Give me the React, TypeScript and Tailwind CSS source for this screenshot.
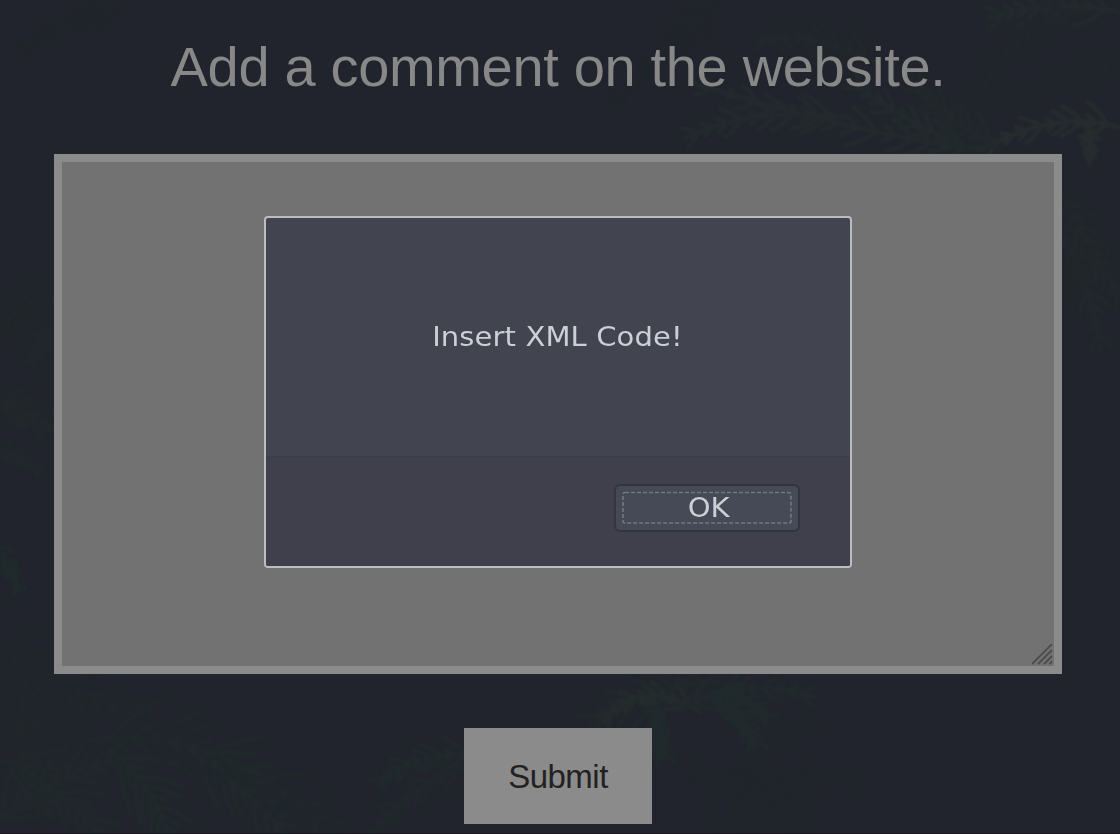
import React from "react";

type Point = [number, number];

interface FrondProps {
  from: Point;
  bend: Point;
  to: Point;
  leaf: number;
  color: string;
  opacity?: number;
  count?: number;
}

/** A conifer twig: a curved stem with tapering needles on both sides. */
function Frond({ from, bend, to, leaf, color, opacity = 1, count = 9 }: FrondProps) {
  let d = `M${from[0]} ${from[1]}Q${bend[0]} ${bend[1]} ${to[0]} ${to[1]}`;
  for (let i = 1; i <= count; i++) {
    const t = i / (count + 1);
    const x = (1 - t) * (1 - t) * from[0] + 2 * t * (1 - t) * bend[0] + t * t * to[0];
    const y = (1 - t) * (1 - t) * from[1] + 2 * t * (1 - t) * bend[1] + t * t * to[1];
    const dx = 2 * (1 - t) * (bend[0] - from[0]) + 2 * t * (to[0] - bend[0]);
    const dy = 2 * (1 - t) * (bend[1] - from[1]) + 2 * t * (to[1] - bend[1]);
    const angle = Math.atan2(dy, dx);
    const size = leaf * 1.25 * (1 - t * 0.6) * (0.8 + 0.4 * Math.sin(i * 2.3));
    for (const side of [-0.8, 0.8]) {
      const a = angle + side;
      const mx = x + Math.cos(a) * size * 0.6;
      const my = y + Math.sin(a) * size * 0.6;
      const ex = mx + Math.cos(angle + side * 0.5) * size * 0.5;
      const ey = my + Math.sin(angle + side * 0.5) * size * 0.5;
      d += `M${x.toFixed(1)} ${y.toFixed(1)}Q${mx.toFixed(1)} ${my.toFixed(1)} ${ex.toFixed(1)} ${ey.toFixed(1)}`;
    }
  }
  return <path d={d} stroke={color} strokeWidth={4.5} strokeLinecap="round" fill="none" opacity={opacity} />;
}

const FRONDS: FrondProps[] = [
  { from: [1120, 128], bend: [1060, 108], to: [980, 150], leaf: 22, color: "#262c2e" },
  { from: [1085, 125], bend: [1092, 140], to: [1089, 164], leaf: 11, color: "#262c2e", count: 5 },
  { from: [980, 150], bend: [860, 135], to: [690, 82], leaf: 28, color: "#232a2d", count: 14 },
  { from: [850, 118], bend: [750, 105], to: [684, 139], leaf: 24, color: "#232a2d" },
  { from: [975, 150], bend: [900, 120], to: [850, 80], leaf: 22, color: "#222a2d" },
  { from: [1000, 150], bend: [950, 120], to: [915, 85], leaf: 24, color: "#21282b" },
  { from: [880, 65], bend: [810, 28], to: [755, 42], leaf: 24, color: "#21272b" },
  { from: [1120, 12], bend: [1050, -2], to: [990, 18], leaf: 26, color: "#222a2d" },
  { from: [1085, 12], bend: [1005, 25], to: [980, 96], leaf: 24, color: "#20262a" },
  { from: [720, 0], bend: [680, 40], to: [610, 105], leaf: 20, color: "#20252a" },
  { from: [1120, 60], bend: [1060, 90], to: [990, 100], leaf: 18, color: "#20262b" },
  { from: [1050, 215], bend: [1090, 270], to: [1101, 350], leaf: 26, color: "#21282b" },
  { from: [1120, 245], bend: [1070, 260], to: [1050, 330], leaf: 30, color: "#20262a" },
  { from: [1060, 190], bend: [1090, 250], to: [1125, 305], leaf: 24, color: "#21272b" },
  { from: [120, 10], bend: [70, 20], to: [22, 48], leaf: 16, color: "#20252a" },
  { from: [70, 285], bend: [20, 300], to: [-10, 340], leaf: 28, color: "#20262a" },
  { from: [65, 310], bend: [42, 340], to: [30, 365], leaf: 18, color: "#20262b" },
  { from: [-10, 400], bend: [20, 405], to: [65, 438], leaf: 24, color: "#21272b" },
  { from: [-10, 454], bend: [15, 450], to: [42, 474], leaf: 12, color: "#20282b", count: 6 },
  { from: [-10, 540], bend: [8, 560], to: [20, 592], leaf: 14, color: "#202a2c", count: 6 },
  { from: [-10, 650], bend: [40, 660], to: [125, 715], leaf: 38, color: "#20262a" },
  { from: [0, 740], bend: [80, 695], to: [150, 710], leaf: 36, color: "#20262a" },
  { from: [30, 670], bend: [10, 730], to: [35, 810], leaf: 34, color: "#20262a" },
  { from: [90, 740], bend: [230, 725], to: [330, 834], leaf: 46, color: "#20282b", count: 12 },
  { from: [110, 750], bend: [160, 790], to: [172, 850], leaf: 42, color: "#20292b" },
  { from: [190, 750], bend: [240, 780], to: [300, 850], leaf: 40, color: "#20292b" },
  { from: [0, 760], bend: [60, 780], to: [110, 850], leaf: 42, color: "#20282b", count: 11 },
  { from: [-10, 830], bend: [50, 770], to: [120, 760], leaf: 36, color: "#20282b" },
  { from: [360, 850], bend: [250, 770], to: [150, 755], leaf: 34, color: "#20272b", opacity: 0.7 },
  { from: [480, 755], bend: [410, 750], to: [378, 785], leaf: 20, color: "#20292c" },
  { from: [470, 765], bend: [400, 790], to: [370, 840], leaf: 20, color: "#20282b" },
  { from: [720, 682], bend: [640, 685], to: [590, 725], leaf: 30, color: "#21282b" },
  { from: [700, 712], bend: [640, 675], to: [603, 722], leaf: 18, color: "#242b2c" },
  { from: [680, 710], bend: [750, 675], to: [814, 697], leaf: 22, color: "#21292c" },
  { from: [700, 695], bend: [745, 700], to: [755, 747], leaf: 26, color: "#20292c" },
  { from: [660, 700], bend: [650, 730], to: [664, 759], leaf: 22, color: "#20292c" },
  { from: [710, 690], bend: [760, 700], to: [768, 719], leaf: 17, color: "#20292c", count: 6 },
  { from: [710, 850], bend: [760, 740], to: [815, 720], leaf: 26, color: "#20252b", opacity: 0.8 },
  { from: [740, 850], bend: [760, 770], to: [860, 780], leaf: 25, color: "#20252b", opacity: 0.8 },
  { from: [810, 850], bend: [790, 780], to: [690, 770], leaf: 25, color: "#20252b", opacity: 0.8 },
];

function ForestBackdrop() {
  return (
    <svg className="absolute inset-0 blur-[1.2px]" width="1120" height="834" viewBox="0 0 1120 834" aria-hidden="true">
      {FRONDS.map((frond, i) => (
        <Frond key={i} {...frond} />
      ))}
    </svg>
  );
}

function ResizeGrip() {
  return (
    <svg width="22" height="22" viewBox="0 0 22 22" aria-hidden="true">
      <path d="M0 20L20 0M6 20L20 6M12 20L20 12M17.5 20L20 17.5" stroke="#4c4c4c" strokeWidth="1.8" fill="none" />
    </svg>
  );
}

/** Dotted keyboard-focus outline drawn just inside the button. */
function FocusRing() {
  return (
    <svg className="absolute top-[5px] left-[6px]" width="170" height="34" viewBox="0 0 170 34" aria-hidden="true">
      <rect x="1" y="1.5" width="168" height="30.5" rx="2" fill="none" stroke="#737781" strokeWidth="1.6" strokeDasharray="4 2" />
    </svg>
  );
}

function AlertDialog() {
  return (
    <div
      role="alertdialog"
      className="absolute left-[264px] top-[215.5px] flex h-[352.5px] w-[588px] flex-col overflow-hidden rounded-[4px] border-2 border-[#bdbdc1] bg-[#424550] font-['DejaVu_Sans',sans-serif] text-[27px] leading-8 text-[#cbd0d6]"
    >
      <div className="flex h-[238px] items-center justify-center">
        <p className="scale-x-[1.075] pr-[2px] tracking-[0.1px]">Insert XML Code!</p>
      </div>
      <div className="flex flex-1 items-start justify-end border-t border-[#3b3d48] bg-[#3f404c] pt-[27px] pr-[50px]">
        <button className="relative flex h-12 w-[186px] items-center justify-center rounded-[6px] border-2 border-[#32343f] bg-[#454a56]">
          <FocusRing />
          <span className="scale-x-[1.075] pt-px pl-[3px]">OK</span>
        </button>
      </div>
    </div>
  );
}

export default function App() {
  return (
    <main className="relative flex h-[834px] w-[1120px] flex-col items-start overflow-hidden border-b border-[#1b1720] bg-[#21242c] font-['Liberation_Sans',Arial,sans-serif]">
      <ForestBackdrop />
      <div className="relative flex w-[1116px] flex-col items-center pt-[35px]">
        <h1 className="h-[119px] text-[56px] leading-[64px] tracking-[-0.33px] whitespace-nowrap text-[#888888]">
          Add a comment on the website.
        </h1>
        <div className="flex h-[520px] w-[1008px] items-end justify-end border-8 border-[#8b8b8b] bg-[#727272]">
          <ResizeGrip />
        </div>
        <button className="mt-[54px] h-24 w-[188px] bg-[#8b8b8b] pt-px text-[33px] leading-9 tracking-[-0.5px] text-[#222222]">
          Submit
        </button>
      </div>
      <AlertDialog />
    </main>
  );
}
